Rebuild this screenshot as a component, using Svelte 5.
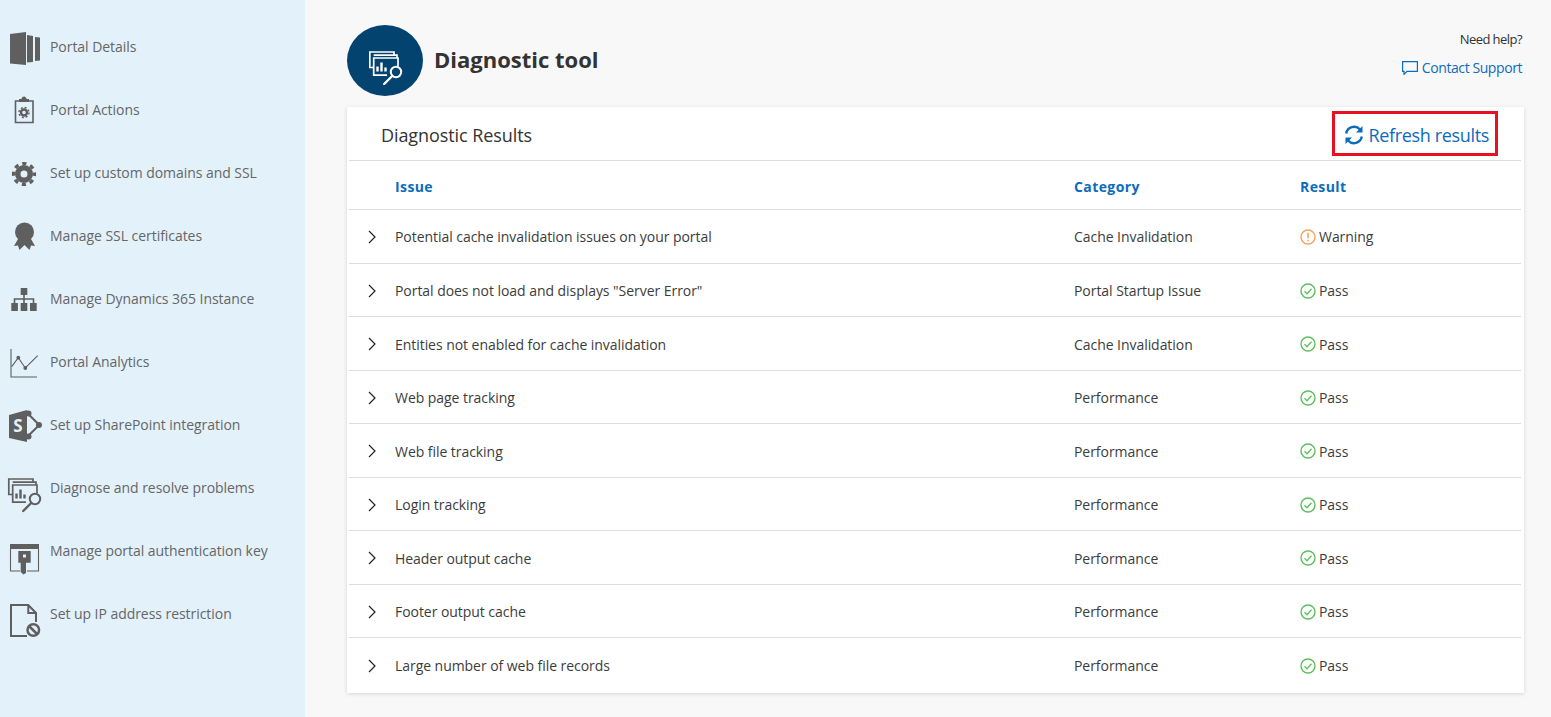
<script lang="ts">
	const navItems = [
		{ label: 'Portal Details', icon: 'details' },
		{ label: 'Portal Actions', icon: 'actions' },
		{ label: 'Set up custom domains and SSL', icon: 'gear' },
		{ label: 'Manage SSL certificates', icon: 'ribbon' },
		{ label: 'Manage Dynamics 365 Instance', icon: 'org' },
		{ label: 'Portal Analytics', icon: 'chart' },
		{ label: 'Set up SharePoint integration', icon: 'sharepoint' },
		{ label: 'Diagnose and resolve problems', icon: 'diagnose' },
		{ label: 'Manage portal authentication key', icon: 'key' },
		{ label: 'Set up IP address restriction', icon: 'restrict' }
	];

	const results = [
		{ issue: 'Potential cache invalidation issues on your portal', category: 'Cache Invalidation', result: 'Warning' },
		{ issue: 'Portal does not load and displays "Server Error"', category: 'Portal Startup Issue', result: 'Pass' },
		{ issue: 'Entities not enabled for cache invalidation', category: 'Cache Invalidation', result: 'Pass' },
		{ issue: 'Web page tracking', category: 'Performance', result: 'Pass' },
		{ issue: 'Web file tracking', category: 'Performance', result: 'Pass' },
		{ issue: 'Login tracking', category: 'Performance', result: 'Pass' },
		{ issue: 'Header output cache', category: 'Performance', result: 'Pass' },
		{ issue: 'Footer output cache', category: 'Performance', result: 'Pass' },
		{ issue: 'Large number of web file records', category: 'Performance', result: 'Pass' }
	];
</script>

<!-- charts behind a magnifier, 34x34, used in the nav and in the title badge -->
{#snippet diagnoseGlyph()}
	<g fill="none" stroke="currentColor" stroke-width="1.7">
		<path d="M4.500 16.500H.800V1H25v3" />
		<path d="M4.700 4.200H28v2.800" />
		<path d="M18 24.200H4.700V7H29v8.500" />
		<path d="M8.500 20.500v-5M12.500 20.500v-9M16.500 20.500v-4" stroke-width="2.400" />
		<circle cx="27" cy="21" r="5.200" stroke-width="2" />
		<path d="M23.200 25l-8 8" stroke-width="2.400" stroke-linecap="round" />
	</g>
{/snippet}

{#snippet navIcon(name: string)}
	<svg class="nav-icon" viewBox="0 0 36 40" width="36" height="40">
		{#if name === 'details'}
			<path d="M2 8 18 6v33L2 37.500z" />
			<path d="M19 9l6 1v26l-6 .5z" />
			<path d="M27 11l5 .5v23l-5 .5z" />
		{:else if name === 'actions'}
			<path d="M7.500 12h17.500v21.500H7.500z" fill="none" stroke="currentColor" stroke-width="1.600" />
			<path d="M11 13v-3h2.500c0-3.500 5-3.500 5 0H21v3z" />
			<circle cx="16" cy="23.500" r="3" fill="none" stroke="currentColor" stroke-width="2.400" />
			<circle cx="16" cy="23.500" r="5" fill="none" stroke="currentColor" stroke-width="1.400" stroke-dasharray="2 1.930" />
		{:else if name === 'gear'}
			<circle cx="16" cy="22" r="6.250" fill="none" stroke="currentColor" stroke-width="5.500" />
			<circle cx="16" cy="22" r="10.500" fill="none" stroke="currentColor" stroke-width="3.200" stroke-dasharray="4.200 4.050" stroke-dashoffset="2.100" />
		{:else if name === 'ribbon'}
			<path d="M10 24 6 31l4-.5 1.500 4.500 5-5 5 5 1.500-4.500 4 .5-4-7z" />
			<circle cx="16.500" cy="17" r="9.500" />
		{:else if name === 'org'}
			<path d="M12.700 10h6.600v7h-6.600zM3.300 25h6.600v8H3.300zM12.700 25h6.600v8h-6.600zM22 25h6.700v8H22z" />
			<path d="M16 17v8M6.500 25v-4h19v4" fill="none" stroke="currentColor" stroke-width="1.600" />
		{:else if name === 'chart'}
			<path d="M3 8v28h26" fill="none" stroke="currentColor" stroke-width="1.100" />
			<path d="M3.700 25.700l6.600-9L17.300 27l12.400-12.300" fill="none" stroke="currentColor" stroke-width="1.100" />
			<circle cx="10.300" cy="16.700" r="1.900" />
			<circle cx="17.300" cy="27" r="1.900" />
		{:else if name === 'sharepoint'}
			<path d="M1 11 19 6v32L1 34z" />
			<text class="sp-letter" x="10" y="27.500" text-anchor="middle">S</text>
			<path d="M19.300 9l12 12-12 11.700" fill="none" stroke="currentColor" stroke-width="2" />
			<circle cx="20.500" cy="9.500" r="3" />
			<circle cx="31" cy="21" r="3" />
			<circle cx="20.500" cy="32.500" r="3" />
		{:else if name === 'diagnose'}
			<g transform="translate(0 11)">{@render diagnoseGlyph()}</g>
		{:else if name === 'key'}
			<path d="M2 14h29v5H2z" />
			<path d="M2.500 19v22h9.500M19 41h11.500V19" fill="none" stroke="currentColor" stroke-width="1.100" />
			<path d="M10.300 21h12.400v11.700H18V43l-2.500 1.500-2.800-2.500V32.700h-2.400zM15 24.500v3h3v-3z" fill-rule="evenodd" />
		{:else if name === 'restrict'}
			<path d="M19 43H3V12h17.300L28 20v9M20.300 12v8H28" fill="none" stroke="currentColor" stroke-width="2" />
			<circle cx="25.300" cy="37" r="5.800" fill="none" stroke="currentColor" stroke-width="2.500" />
			<path d="M21 33l8.500 8.500" fill="none" stroke="currentColor" stroke-width="2.500" />
		{/if}
	</svg>
{/snippet}

<div class="page">
	<nav class="sidebar">
		{#each navItems as item}
			<div class="nav-item">
				<span class="nav-icon-wrap">{@render navIcon(item.icon)}</span>
				<span>{item.label}</span>
			</div>
		{/each}
	</nav>

	<main class="content">
		<header class="page-header">
			<div class="title-block">
				<div class="title-badge">
					<svg viewBox="0 0 34 34" width="34" height="34">{@render diagnoseGlyph()}</svg>
				</div>
				<h1>Diagnostic tool</h1>
			</div>
			<div class="help">
				<div class="help-label">Need help?</div>
				<div class="help-link">
					<svg viewBox="0 0 16 14" width="16" height="14">
						<path d="M.6.6h14.800v9.800H5l-3 3v-3H.6z" fill="none" stroke="currentColor" stroke-width="1.200" />
					</svg>
					Contact Support
				</div>
			</div>
		</header>

		<section class="card">
			<div class="card-header">
				<h2>Diagnostic Results</h2>
				<div class="refresh">
					<svg viewBox="0 0 20 20" width="20" height="20">
						<path d="M2.200 8.500A8 8 0 0 1 16 4.500" fill="none" stroke="currentColor" stroke-width="2.400" />
						<path d="M17.800 11.500A8 8 0 0 1 4 15.500" fill="none" stroke="currentColor" stroke-width="2.400" />
						<path d="M18.500 1v6.500H12zM1.500 19v-6.500H8z" fill="currentColor" />
					</svg>
					Refresh results
				</div>
			</div>

			<div class="row head">
				<span></span>
				<span>Issue</span>
				<span>Category</span>
				<span>Result</span>
			</div>

			{#each results as row}
				<div class="row">
					<svg class="chevron" viewBox="0 0 10 14" width="10" height="14">
						<path d="M2 1l6 6-6 6" fill="none" stroke="#222" stroke-width="1.200" />
					</svg>
					<span>{row.issue}</span>
					<span>{row.category}</span>
					<span class="result">
						{#if row.result === 'Warning'}
							<svg viewBox="0 0 16 16" width="16" height="16">
								<circle cx="8" cy="8" r="7" fill="none" stroke="#f7a35c" stroke-width="1.400" />
								<path d="M8 3.800v5.400M8 10.700v1.500" stroke="#f7a35c" stroke-width="1.600" />
							</svg>
						{:else}
							<svg viewBox="0 0 16 16" width="16" height="16">
								<circle cx="8" cy="8" r="7" fill="none" stroke="#5cc05c" stroke-width="1.400" />
								<path d="M4.500 8.300l2.500 2.500 4.500-5" fill="none" stroke="#5cc05c" stroke-width="1.300" />
							</svg>
						{/if}
						{row.result}
					</span>
				</div>
			{/each}
		</section>
	</main>
</div>

<style>
	:global(body) {
		background: #f8f8f8;
	}

	.page {
		display: flex;
		height: 717px;
		overflow: hidden;
		font-family: 'Open Sans', 'Noto Sans', sans-serif;
		font-size: 14px;
		letter-spacing: -0.05px;
		color: #3c3c3c;
	}

	.sidebar {
		width: 305px;
		flex-shrink: 0;
		background: #e3f1fb;
		padding-top: 15px;
		box-sizing: border-box;
	}

	.nav-item {
		display: flex;
		align-items: center;
		height: 63px;
		padding-bottom: 1px;
		box-sizing: border-box;
		color: #666;
	}

	.nav-icon-wrap {
		width: 50px;
		padding-left: 8px;
		box-sizing: border-box;
		display: flex;
	}

	.nav-icon {
		fill: #5f5f5f;
		color: #5f5f5f;
		overflow: visible;
	}

	.sp-letter {
		font-family: 'Open Sans', sans-serif;
		font-size: 17px;
		font-weight: 700;
		fill: #e3f1fb;
	}

	.content {
		flex: 1;
		padding: 25px 27px 0 42px;
		min-width: 0;
	}

	.page-header {
		display: flex;
		justify-content: space-between;
		height: 82px;
	}

	.title-block {
		display: flex;
		align-items: flex-start;
		gap: 11px;
	}

	.title-badge {
		width: 76px;
		height: 71px;
		box-sizing: border-box;
		padding: 26px 0 0 22px;
		border-radius: 50%;
		background: #03436f;
		color: #fff;
	}

	h1 {
		margin: 18px 0 0;
		font-size: 22px;
		line-height: 32px;
		font-weight: 700;
		letter-spacing: 0;
		color: #333;
	}

	.help {
		text-align: right;
		font-size: 13px;
		padding: 5px 2px 0 0;
	}

	.help-label {
		line-height: 18px;
		color: #333;
		letter-spacing: -0.55px;
	}

	.help-link {
		margin-top: 10px;
		line-height: 20px;
		font-size: 14px;
		color: #0b6cbd;
		display: flex;
		align-items: center;
		gap: 4px;
		letter-spacing: -0.42px;
	}

	.card {
		background: #fff;
		height: 586px;
		box-sizing: border-box;
		padding: 0 3px 0 2px;
		box-shadow: 0 1px 4px rgba(0, 0, 0, 0.14);
	}

	.card-header {
		display: flex;
		justify-content: space-between;
		align-items: center;
		height: 54px;
		box-sizing: border-box;
		padding: 3px 32px 0 32px;
		border-bottom: 1px solid #ddd;
	}

	h2 {
		margin: 0;
		font-size: 18px;
		font-weight: 400;
		letter-spacing: -0.08px;
		color: #333;
	}

	.refresh {
		display: flex;
		align-items: center;
		gap: 5px;
		font-size: 18px;
		letter-spacing: -0.35px;
		color: #0b6cbd;
		outline: 3px solid #e81123;
		height: 39px;
		box-sizing: border-box;
		margin: -3px -6px 0 0;
		padding: 2px 6px 0 9px;
	}

	.row {
		display: grid;
		grid-template-columns: 46px 679px 226px 1fr;
		align-items: center;
		height: 53.500px;
		box-sizing: border-box;
		padding-top: 2px;
		border-bottom: 1px solid #ddd;
	}

	.row:last-child {
		border-bottom: none;
	}

	.row.head {
		height: 49px;
		padding-top: 2px;
		font-weight: 700;
		letter-spacing: 0.4px;
		color: #0b6cbd;
	}

	.head + .row {
		padding-top: 1px;
	}

	.chevron {
		margin-left: 18px;
	}

	.result {
		display: flex;
		align-items: center;
		gap: 3px;
	}
</style>
